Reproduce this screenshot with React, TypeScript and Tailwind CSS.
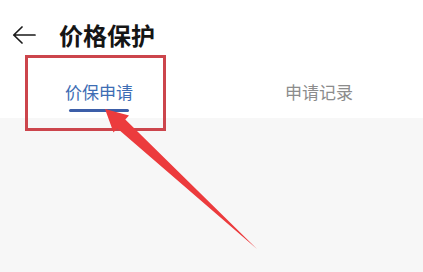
import React from "react";

export default function App() {
  return (
    <div
      className="relative w-[423px] h-[272px] overflow-hidden bg-white"
      style={{ fontFamily: '"Noto Sans CJK SC", "Noto Sans", sans-serif' }}
    >
      {/* Header */}
      <div className="flex h-[70px] items-center pl-[12px]">
        <svg width="24" height="18" viewBox="0 0 24 18" className="shrink-0">
          <path
            d="M23 9 H1.8 M10 1 L1.8 9 L10 17"
            fill="none"
            stroke="#1a1a1a"
            strokeWidth="1.7"
            strokeLinecap="round"
            strokeLinejoin="round"
          />
        </svg>
        <div className="ml-[23px] text-[24px] font-bold leading-[30px] text-[#151515]">
          价格保护
        </div>
      </div>

      {/* Tabs */}
      <div className="flex h-[48px]">
        <div className="flex w-[198px] shrink-0 flex-col items-center pt-[12px]">
          <div className="text-[17px] leading-[20px] text-[#3d6db4]">价保申请</div>
          <div className="mt-[7px] h-[3px] w-[60px] rounded-full bg-[#3c5ea8]" />
        </div>
        <div className="flex flex-1 flex-col items-center pl-[17px] pt-[12px]">
          <div className="text-[17px] leading-[20px] text-[#8c8c8c]">申请记录</div>
        </div>
      </div>

      {/* Gray content */}
      <div className="h-[154px] bg-[#f7f7f7]" />

      {/* Annotation: red box */}
      <div className="pointer-events-none absolute left-[25px] top-[55px] h-[76px] w-[141px] border-[3px] border-[#cc454c]" />

      {/* Annotation: red arrow */}
      <svg
        className="pointer-events-none absolute left-0 top-0"
        width="423"
        height="272"
        viewBox="0 0 423 272"
      >
        <polygon
          points="105,109 129,115.5 125.3,119.5 257,249 117.1,128.3 113.5,132.5"
          fill="#ec3b3d"
        />
      </svg>
    </div>
  );
}
